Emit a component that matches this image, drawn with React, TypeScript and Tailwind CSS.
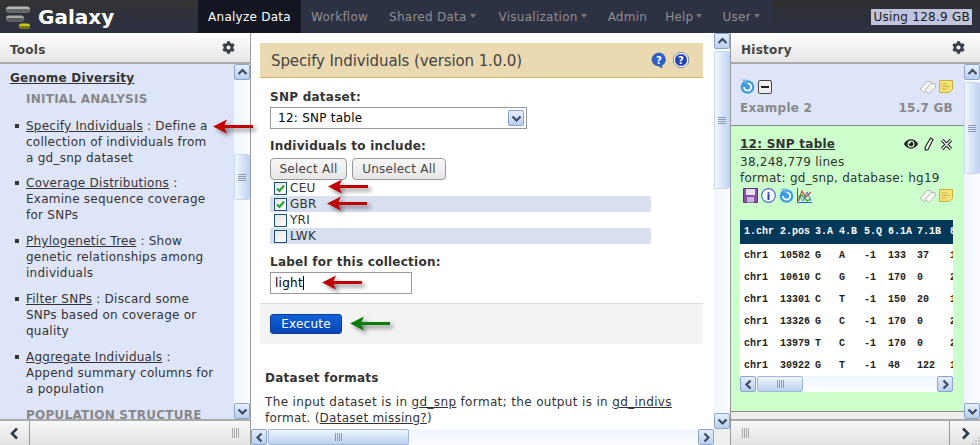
import { FaCog, FaEye } from "react-icons/fa";

const sans = "font-['DejaVu_Sans',Verdana,sans-serif]";

function Chevron({ dir, className = "" }: { dir: "up" | "down" | "left" | "right"; className?: string }) {
  const d = {
    up: "M1.5 7 5.5 3 9.5 7",
    down: "M1.5 3.5 5.5 7.5 9.5 3.5",
    left: "M7.5 1.5 3.5 5.5 7.5 9.5",
    right: "M3.5 1.5 7.5 5.5 3.5 9.5",
  }[dir];
  return (
    <svg viewBox="0 0 11 11" className={`h-[11px] w-[11px] ${className}`}>
      <path d={d} fill="none" stroke="#3d4a63" strokeWidth="2.2" />
    </svg>
  );
}

function ScrollButton({ dir }: { dir: "up" | "down" | "left" | "right" }) {
  return (
    <div className="flex h-[16px] w-[16px] shrink-0 items-center justify-center rounded-[2px] border border-[#8aa4cc] bg-gradient-to-b from-[#e6effd] to-[#b9cfee]">
      <Chevron dir={dir} />
    </div>
  );
}

function VScroll({ before, thumb }: { before: string; thumb: string }) {
  return (
    <div className="flex w-[16px] shrink-0 flex-col bg-gradient-to-r from-[#f0f6ff] to-[#fbfdff]">
      <ScrollButton dir="up" />
      <div className={before} />
      <div className={`flex w-[16px] shrink-0 flex-col items-center justify-center gap-[1px] rounded-[2px] border border-[#c4d6f0] bg-gradient-to-r from-[#f4f8ff] to-[#bfd4f2] ${thumb}`}>
        <span className="h-px w-[8px] bg-[#8a9bb5]" />
        <span className="h-px w-[8px] bg-[#8a9bb5]" />
        <span className="h-px w-[8px] bg-[#8a9bb5]" />
        <span className="h-px w-[8px] bg-[#8a9bb5]" />
      </div>
      <div className="flex-1" />
      <ScrollButton dir="down" />
    </div>
  );
}

function HScroll({ thumb }: { thumb: string }) {
  return (
    <div className="flex h-[16px] flex-1 items-stretch bg-gradient-to-b from-[#f0f6ff] to-[#fbfdff]">
      <ScrollButton dir="left" />
      <div className={`ml-[1px] flex shrink-0 items-center justify-center gap-[1px] rounded-[2px] border border-[#9fb8dc] bg-gradient-to-b from-[#f0f5fd] to-[#bcd1ef] ${thumb}`}>
        <span className="h-[8px] w-px bg-[#8a9bb5]" />
        <span className="h-[8px] w-px bg-[#8a9bb5]" />
        <span className="h-[8px] w-px bg-[#8a9bb5]" />
        <span className="h-[8px] w-px bg-[#8a9bb5]" />
      </div>
      <div className="flex-1" />
      <ScrollButton dir="right" />
    </div>
  );
}

function Grip({ className = "" }: { className?: string }) {
  return (
    <div className={`flex gap-[1px] ${className}`}>
      <span className="h-[10px] w-px bg-[#aaa]" />
      <span className="h-[10px] w-px bg-[#aaa]" />
      <span className="h-[10px] w-px bg-[#aaa]" />
      <span className="h-[10px] w-px bg-[#aaa]" />
    </div>
  );
}

function Arrow({ color, className }: { color: string; className: string }) {
  return (
    <svg viewBox="0 0 40 15" className={`absolute h-[15px] w-[40px] drop-shadow-[3px_3px_2px_rgba(0,0,0,0.45)] ${className}`}>
      <path d="M0 7.5 14 0.5 11.5 6 40 6 40 9 11.5 9 14 14.5Z" fill={color} />
    </svg>
  );
}

function PanelHeader({ title }: { title: string }) {
  return (
    <div className="flex h-[31px] shrink-0 items-center justify-between border-b-2 border-[#aaa] bg-gradient-to-b from-white to-[#e6e6e6] pl-[10px] pr-[15px]">
      <span className="mt-[5px] text-[12px] font-bold text-[#444]">{title}</span>
      <FaCog className="h-[13px] w-[13px] text-[#3a3f4c]" />
    </div>
  );
}

function Caret() {
  return <span className="ml-[3px] inline-block h-0 w-0 border-x-[3.5px] border-t-[4px] border-x-transparent border-t-[#777] align-[3px]" />;
}

function NavItem({ label, caret, className }: { label: string; caret?: boolean; className: string }) {
  return (
    <span className={`text-[12px] text-[#8f8f8f] ${className}`}>
      {label}
      {caret && <Caret />}
    </span>
  );
}

function Logo() {
  return (
    <svg viewBox="0 0 26 24" className="h-[24px] w-[26px]">
      <rect x="0" y="1.5" width="24" height="6" rx="3" fill="#b5b5b5" />
      <rect x="0" y="4" width="24" height="3.5" rx="1.7" fill="#666" />
      <rect x="0" y="10.5" width="18" height="6" rx="3" fill="#a8a8a8" />
      <rect x="0" y="13" width="18" height="3.5" rx="1.7" fill="#5c5c5c" />
      <rect x="13" y="18.5" width="11" height="5" rx="2.5" fill="#c8c820" />
      <rect x="13" y="21" width="11" height="2.5" rx="1.2" fill="#77770c" />
    </svg>
  );
}

function Tool({ name, rest, lines }: { name: string; rest: string; lines: string[] }) {
  return (
    <li className="relative mb-[10px] pl-[16px] first:mb-[9px]">
      <span className="absolute left-[5px] top-[6px] h-[4px] w-[4px] bg-[#333]" />
      <span className="underline">{name}</span> {rest}
      {lines.map((l) => (
        <span key={l} className="block">
          {l}
        </span>
      ))}
    </li>
  );
}

function HelpBubble() {
  return (
    <svg viewBox="0 0 16 16" className="h-[16px] w-[16px]">
      <path d="M8 1a7 6.5 0 1 0 0 13l3 2-.5-2.6A6.5 6.5 0 0 0 8 1Z" fill="#2a5fcf" stroke="#1b3f94" strokeWidth=".6" />
      <text x="8" y="11.5" textAnchor="middle" fontSize="10" fontWeight="700" fill="#fff">?</text>
    </svg>
  );
}

function HelpOct() {
  return (
    <svg viewBox="0 0 16 16" className="h-[16px] w-[16px]">
      <path d="M5 .6h6L15.4 5v6L11 15.4H5L.6 11V5Z" fill="#fff" stroke="#7d8796" />
      <path d="M5.6 2.2h4.8L13.8 5.6v4.8L10.4 13.8H5.6L2.2 10.4V5.6Z" fill="#2340b8" />
      <text x="8" y="11.5" textAnchor="middle" fontSize="10" fontWeight="700" fill="#fff">?</text>
    </svg>
  );
}

function Refresh() {
  return (
    <svg viewBox="0 0 15 15" className="h-[15px] w-[15px]">
      <circle cx="7.5" cy="8" r="6.8" fill="#3b9de0" />
      <path d="M4 8a3.6 3.6 0 1 0 3.6-3.6" fill="none" stroke="#fff" strokeWidth="1.8" />
      <path d="M1.5 0.5h5v5Z" fill="#7fb4e8" />
    </svg>
  );
}

function Tags() {
  return (
    <svg viewBox="0 0 17 14" className="h-[14px] w-[17px]">
      <path d="M1 9 8 1.5h4l.5 3.5L5.5 13Z" fill="#f4f7f4" stroke="#b5b8b5" />
      <path d="M6 10.5 12 3.5h4l.5 3.5L10 13.5Z" fill="#f4f7f4" stroke="#b5b8b5" />
    </svg>
  );
}

function Note() {
  return (
    <svg viewBox="0 0 14 13" className="h-[13px] w-[14px]">
      <path d="M.5.5h13v9l-3 3H.5Z" fill="#f6e27a" stroke="#c9b13a" />
      <path d="M2.5 4h6M2.5 6.5h8M2.5 9h5" stroke="#c9b13a" />
    </svg>
  );
}

function Floppy() {
  return (
    <svg viewBox="0 0 15 15" className="h-[15px] w-[15px]">
      <path d="M.5.5h14v14H.5Z" fill="#8a4fa8" stroke="#5f2f80" />
      <rect x="3" y="1" width="9" height="6" fill="#e8dff0" />
      <rect x="4" y="9" width="7" height="5.5" fill="#c6b4d6" />
    </svg>
  );
}

function Info() {
  return (
    <svg viewBox="0 0 15 15" className="h-[15px] w-[15px]">
      <circle cx="7.5" cy="7.5" r="6.8" fill="#fff" stroke="#4a6fd0" strokeWidth="1.2" />
      <text x="7.5" y="11.5" textAnchor="middle" fontSize="11" fontWeight="700" fill="#2340b8">i</text>
    </svg>
  );
}

function Chart() {
  return (
    <svg viewBox="0 0 15 15" className="h-[15px] w-[15px]">
      <path d="M.5 0v14.5H15" fill="none" stroke="#2a5fcf" />
      <path d="M1.5 13 5 3l4 6 5-5" fill="none" stroke="#d63b3b" strokeWidth="1.2" />
      <path d="M1.5 10 5 7l5 6 4-2" fill="none" stroke="#2ba02b" strokeWidth="1.2" />
      <path d="M1.5 7 6 13l4-9 4 9" fill="none" stroke="#2a5fcf" strokeWidth=".8" />
    </svg>
  );
}

function Check({ checked }: { checked?: boolean }) {
  return (
    <span className="mr-[3px] flex h-[13px] w-[13px] shrink-0 items-center justify-center border border-[#1c5180] bg-gradient-to-br from-[#e4e4e0] to-white">
      {checked && (
        <svg viewBox="0 0 11 11" className="h-[11px] w-[11px]">
          <path d="M2 5.5 4.5 8 9 2.5" fill="none" stroke="#22a52b" strokeWidth="2" />
        </svg>
      )}
    </span>
  );
}

const rows = [
  ["chr1", "10582", "G", "A", "-1", "133", "37", "1"],
  ["chr1", "10610", "C", "G", "-1", "170", "0", "2"],
  ["chr1", "13301", "C", "T", "-1", "150", "20", "1"],
  ["chr1", "13326", "G", "C", "-1", "170", "0", "2"],
  ["chr1", "13979", "T", "C", "-1", "170", "0", "2"],
  ["chr1", "30922", "G", "T", "-1", "48", "122", "1"],
];

const populations = [
  { name: "CEU", checked: true },
  { name: "GBR", checked: true },
  { name: "YRI" },
  { name: "LWK" },
];

export default function App() {
  return (
    <div className={`relative flex h-[445px] w-[980px] flex-col overflow-hidden bg-white text-[12px] leading-[16px] tracking-[0.25px] text-[#333] ${sans}`}>
      {/* Masthead */}
      <div className="flex h-[33px] shrink-0 items-stretch bg-[#2c3143]">
        <div className="flex w-[198px] items-center gap-[6px] bg-gradient-to-b from-[#333] to-[#2c3143] pl-[6px]">
          <Logo />
          <span className="mt-[1px] text-[20px] font-bold tracking-normal text-white">Galaxy</span>
        </div>
        <span className="flex w-[103px] items-center justify-center bg-[#131520] text-[12px] text-white">Analyze Data</span>
        <div className="flex w-[471px] items-center">
          <NavItem label="Workflow" className="ml-[10px]" />
          <NavItem label="Shared Data" caret className="ml-[21px]" />
          <NavItem label="Visualization" caret className="ml-[23px]" />
          <NavItem label="Admin" className="ml-[21px]" />
          <NavItem label="Help" caret className="ml-[18px]" />
          <NavItem label="User" caret className="ml-[20px]" />
        </div>
        <div className="flex flex-1 items-center justify-end bg-gradient-to-b from-[#303030] to-[#2c3143] pr-[8px]">
          <span className="bg-[#c0c4dc] px-[2px] text-[12px] text-[#1a1a1a]">Using 128.9 GB</span>
        </div>
      </div>

      <div className="flex min-h-0 flex-1">
        {/* Tools */}
        <div className="flex w-[251px] shrink-0 flex-col border-r border-[#999]">
          <PanelHeader title="Tools" />
          <div className="flex min-h-0 flex-1">
            <div className="min-w-0 flex-1 overflow-hidden bg-[#dfe5f9] pl-[10px] pr-[8px] pt-[6px]">
              <div className="font-bold underline">Genome Diversity</div>
              <div className="mb-[11px] ml-[16px] mt-[5px] font-bold text-[#888]">INITIAL ANALYSIS</div>
              <ul>
                <Tool name="Specify Individuals" rest=": Define a" lines={["collection of individuals from", "a gd_snp dataset"]} />
                <Tool name="Coverage Distributions" rest=":" lines={["Examine sequence coverage", "for SNPs"]} />
                <Tool name="Phylogenetic Tree" rest=": Show" lines={["genetic relationships among", "individuals"]} />
                <Tool name="Filter SNPs" rest=": Discard some" lines={["SNPs based on coverage or", "quality"]} />
                <Tool name="Aggregate Individuals" rest=":" lines={["Append summary columns for", "a population"]} />
              </ul>
              <div className="ml-[16px] mt-[7px] font-bold text-[#888]">POPULATION STRUCTURE</div>
            </div>
            <VScroll before="h-[74px]" thumb="h-[46px]" />
          </div>
          <div className="flex h-[26px] shrink-0 items-stretch border-t-2 border-[#aaa] bg-gradient-to-b from-[#f8f8f8] to-[#e2e2e2]">
            <div className="flex w-[30px] items-center justify-center border-r border-[#999]">
              <svg viewBox="0 0 11 13" className="h-[13px] w-[11px]">
                <path d="M8 1.5 3 6.5 8 11.5" fill="none" stroke="#2f3a4a" strokeWidth="2.6" />
              </svg>
            </div>
            <div className="flex flex-1 items-center justify-end pr-[11px]">
              <Grip />
            </div>
          </div>
        </div>

        {/* Center */}
        <div className="flex w-[479px] shrink-0 flex-col">
          <div className="flex min-h-0 flex-1">
            <div className="min-w-0 flex-1 overflow-hidden pt-[10px]">
              <div className="ml-[9px] mr-[11px] flex h-[35px] items-center justify-between border-b border-[#d8b365] bg-[#ebd9b2] pl-[11px] pr-[14px]">
                <span className="mt-[1px] text-[15px] tracking-[-0.1px] text-[#444]">Specify Individuals (version 1.0.0)</span>
                <span className="flex items-center gap-[6px]">
                  <HelpBubble />
                  <HelpOct />
                </span>
              </div>
              <div className="ml-[19px] mr-[63px] mt-[11px]">
                <div className="font-bold">SNP dataset:</div>
                <div className="mt-[2px] flex h-[22px] w-[257px] items-center justify-between border border-[#999] pl-[7px] pr-[2px]">
                  <span className="text-black">12: SNP table</span>
                  <span className="flex h-[16px] w-[16px] items-center justify-center rounded-[2px] border border-[#8aa4cc] bg-gradient-to-b from-[#e6effd] to-[#b9cfee]">
                    <Chevron dir="down" />
                  </span>
                </div>
                <div className="mt-[9px] font-bold">Individuals to include:</div>
                <div className="mt-[4px] flex gap-[5px]">
                  <button className="flex h-[22px] w-[77px] items-center justify-center rounded-[4px] border border-[#999] bg-gradient-to-b from-[#f8f8f8] to-[#e6e6e6] text-[#444]">Select All</button>
                  <button className="flex h-[22px] w-[94px] items-center justify-center rounded-[4px] border border-[#999] bg-gradient-to-b from-[#f8f8f8] to-[#e6e6e6] text-[#444]">Unselect All</button>
                </div>
                {populations.map((p, i) => (
                  <div key={p.name} className={`flex h-[16px] items-center pl-[4px] ${i % 2 ? "bg-[#d8dfef]" : ""}`}>
                    <Check checked={p.checked} />
                    {p.name}
                  </div>
                ))}
                <div className="mt-[10px] font-bold">Label for this collection:</div>
                <div className="mt-[2px] flex h-[22px] w-[142px] items-center border border-[#999] pl-[4px] text-black">
                  light<span className="h-[14px] w-px bg-black" />
                </div>
              </div>
              <div className="ml-[9px] mr-[11px] mt-[9px] h-[41px] border-t border-[#ddd] bg-[#f3f3f3] pl-[10px] pt-[10px]">
                <button className="flex h-[20px] w-[72px] items-center justify-center rounded-[3px] border border-[#0a3a9c] bg-gradient-to-b from-[#0f62d8] to-[#0a45b5] text-white">Execute</button>
              </div>
              <div className="ml-[14px] mr-[6px] mt-[26px] font-bold">Dataset formats</div>
              <div className="ml-[14px] mt-[8px] whitespace-nowrap">
                <span className="tracking-[0.35px]">
                  The input dataset is in <span className="underline">gd_snp</span> format; the output is in <span className="underline">gd_indivs</span>
                </span>
                <br />
                format. (<span className="underline">Dataset missing?</span>)
              </div>
            </div>
            <VScroll before="h-[2px]" thumb="h-[138px]" />
          </div>
          <div className="flex shrink-0 items-stretch">
            <HScroll thumb="w-[141px]" />
            <div className="w-[16px] bg-[#eee]" />
          </div>
        </div>

        {/* History */}
        <div className="flex min-w-0 flex-1 flex-col border-l border-[#999]">
          <PanelHeader title="History" />
          <div className="flex min-h-0 flex-1">
            <div className="min-w-0 flex-1 overflow-hidden bg-[#eee]">
              <div className="h-[62px] border-b border-[#888] bg-[#dfe5f9] pl-[9px] pr-[11px] pt-[15px]">
                <div className="flex items-center justify-between">
                  <span className="flex items-center gap-[3px]">
                    <Refresh />
                    <span className="flex h-[14px] w-[14px] items-center justify-center rounded-[2px] border border-[#444] bg-[#eee]">
                      <span className="h-[2px] w-[8px] bg-[#222]" />
                    </span>
                  </span>
                  <span className="flex items-center gap-[3px]">
                    <Tags />
                    <Note />
                  </span>
                </div>
                <div className="mt-[6px] flex justify-between font-bold text-[#888]">
                  <span>Example 2</span>
                  <span>15.7 GB</span>
                </div>
              </div>
              <div className="h-[286px] border-b border-[#888] bg-[#ccffcc] pt-[10px]">
                <div className="flex items-center justify-between pl-[9px] pr-[11px]">
                  <span className="font-bold underline">12: SNP table</span>
                  <span className="flex items-center gap-[6px]">
                    <FaEye className="h-[14px] w-[14px] text-[#222]" />
                    <svg viewBox="0 0 10 14" className="h-[14px] w-[10px]">
                      <path d="M6.5 1 9 2.5 4 12.5 1.5 13 1 10.5Z" fill="#fff" stroke="#222" strokeWidth="1.2" />
                    </svg>
                    <svg viewBox="0 0 13 13" className="h-[13px] w-[13px]">
                      <path d="M2 2 11 11M11 2 2 11" stroke="#222" strokeWidth="3.4" />
                      <path d="M2 2 11 11M11 2 2 11" stroke="#fff" strokeWidth="1.2" />
                    </svg>
                  </span>
                </div>
                <div className="mt-[2px] pl-[9px]">38,248,779 lines</div>
                <div className="pl-[9px]">format: gd_snp, database: hg19</div>
                <div className="mt-[2px] flex items-center justify-between pl-[12px] pr-[11px]">
                  <span className="flex items-center gap-[3px]">
                    <Floppy />
                    <Info />
                    <Refresh />
                    <Chart />
                  </span>
                  <span className="flex items-center gap-[3px]">
                    <Tags />
                    <Note />
                  </span>
                </div>
                <div className="ml-[9px] mt-[17px] w-[213px] overflow-hidden">
                  <table className="w-[226px] table-fixed border-collapse bg-white font-['Liberation_Mono',monospace] text-[10px] font-bold leading-[12px] tracking-normal text-[#222]">
                    <colgroup>
                      <col className="w-[36px]" />
                      <col className="w-[35px]" />
                      <col className="w-[24px]" />
                      <col className="w-[25px]" />
                      <col className="w-[24px]" />
                      <col className="w-[29px]" />
                      <col className="w-[33px]" />
                      <col className="w-[20px]" />
                    </colgroup>
                    <thead>
                      <tr className="h-[24px] bg-[#023858] text-white">
                        {["1.chr", "2.pos", "3.A", "4.B", "5.Q", "6.1A", "7.1B", "8"].map((h) => (
                          <th key={h} className="whitespace-nowrap pl-[4px] text-left font-bold">{h}</th>
                        ))}
                      </tr>
                    </thead>
                    <tbody>
                      {rows.map((r) => (
                        <tr key={r[1]} className="h-[22px]">
                          {r.map((c, i) => (
                            <td key={i} className="whitespace-nowrap pl-[4px] pt-[1px]">{c}</td>
                          ))}
                        </tr>
                      ))}
                    </tbody>
                  </table>
                  <div className="flex">
                    <HScroll thumb="w-[46px]" />
                  </div>
                </div>
              </div>
            </div>
            <VScroll before="h-[2px]" thumb="h-[92px]" />
          </div>
          <div className="relative flex h-[26px] shrink-0 items-stretch border-t-2 border-[#aaa] bg-gradient-to-b from-[#f8f8f8] to-[#e2e2e2]">
            <div className="flex flex-1 items-center pl-[11px]">
              <Grip />
            </div>
            <div className="flex w-[31px] items-center justify-center border-l border-[#999]">
              <svg viewBox="0 0 11 13" className="h-[13px] w-[11px]">
                <path d="M3 1.5 8 6.5 3 11.5" fill="none" stroke="#2f3a4a" strokeWidth="2.6" />
              </svg>
            </div>
            <svg viewBox="0 0 9 9" className="absolute bottom-0 right-0 h-[9px] w-[9px]">
              <path d="M7 1h2v2H7ZM4 4h2v2H4ZM7 4h2v2H7ZM1 7h2v2H1ZM4 7h2v2H4ZM7 7h2v2H7Z" fill="#c8c8c8" />
            </svg>
          </div>
        </div>
      </div>

      <Arrow color="#c00000" className="left-[213px] top-[119px]" />
      <Arrow color="#c00000" className="left-[328px] top-[179px]" />
      <Arrow color="#c00000" className="left-[327px] top-[196px]" />
      <Arrow color="#c00000" className="left-[322px] top-[275px]" />
      <Arrow color="#0a7d0a" className="left-[350px] top-[316px]" />
    </div>
  );
}
